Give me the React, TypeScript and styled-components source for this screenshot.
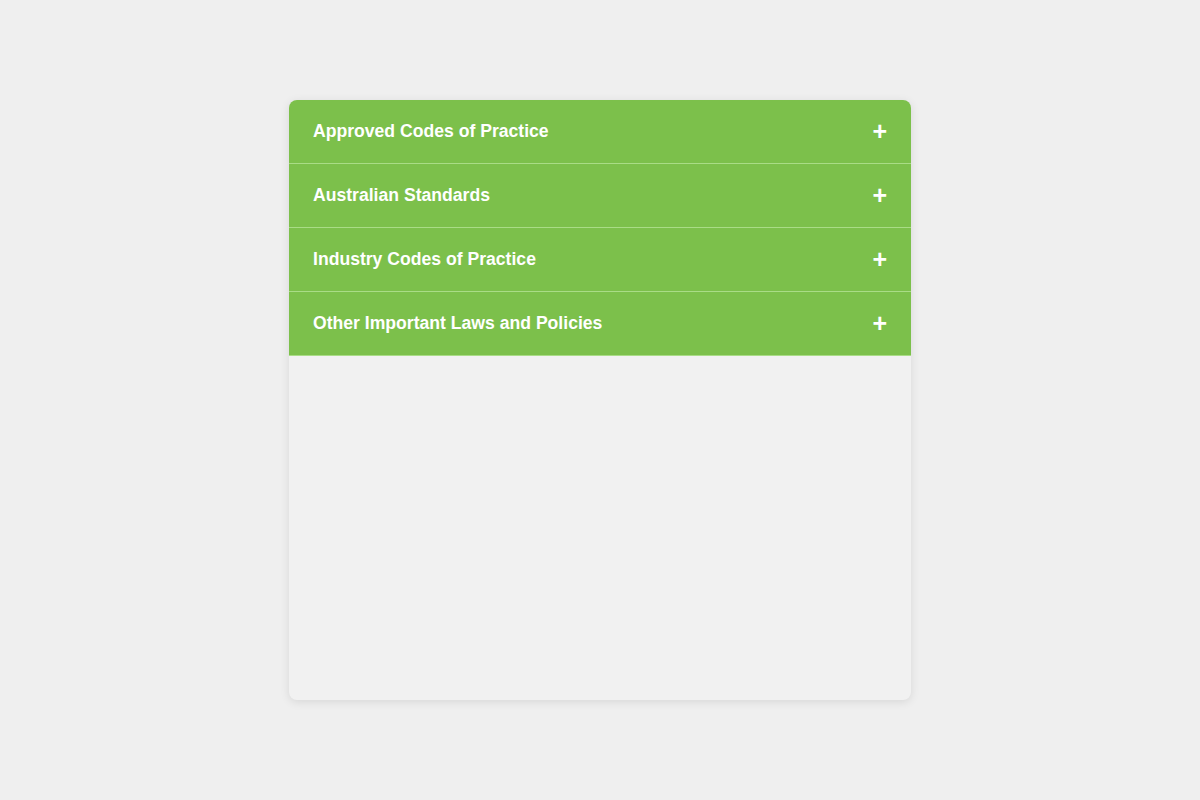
import React, { FC, useState } from "react";
import styled, { createGlobalStyle } from "styled-components";

const GlobalStyle = createGlobalStyle`
    html, body {
        margin: 0;
        padding: 0;
        background: #efefef;
        font-family: "Liberation Sans", Arial, sans-serif;
    }
`;

const Page = styled.div`
    min-height: 800px;
    display: flex;
    justify-content: center;
    padding-top: 100px;
    box-sizing: border-box;
`;

const Card = styled.div`
    width: 622px;
    height: 600px;
    background: #f1f1f1;
    border-radius: 8px;
    overflow: hidden;
    box-shadow: 0 2px 10px rgba(0, 0, 0, 0.1);
`;

const Item = styled.div`
    border-bottom: 1px solid #a9dc86;
`;

const Header = styled.button`
    width: 100%;
    height: 63px;
    display: flex;
    align-items: center;
    justify-content: space-between;
    padding: 0 24px;
    box-sizing: border-box;
    border: none;
    background: #7cc04b;
    color: #fff;
    font-family: inherit;
    font-size: 17.6px;
    font-weight: bold;
    text-align: left;
    cursor: pointer;
`;

const Sign = styled.span`
    font-size: 25px;
    font-weight: bold;
    line-height: 1;
    margin-top: 0;
`;

const Body = styled.div`
    padding: 16px 24px;
    background: #fff;
    color: #333;
    font-size: 15px;
`;

const sections = [
    "Approved Codes of Practice",
    "Australian Standards",
    "Industry Codes of Practice",
    "Other Important Laws and Policies"
];

const App: FC = () => {
    const [open, setOpen] = useState<number | null>(null);

    return (
        <>
            <GlobalStyle />
            <Page>
                <Card>
                    {sections.map((title, i) => (
                        <Item key={title}>
                            <Header onClick={() => setOpen(open === i ? null : i)}>
                                {title}
                                <Sign>{open === i ? "−" : "+"}</Sign>
                            </Header>
                            {open === i ? <Body>{title}</Body> : null}
                        </Item>
                    ))}
                </Card>
            </Page>
        </>
    );
};

export default App;
